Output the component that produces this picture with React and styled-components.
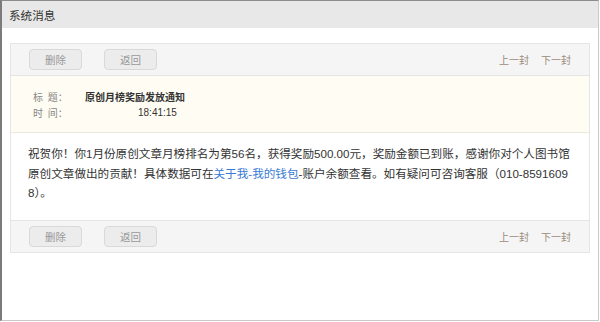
import React from "react";
import styled, { createGlobalStyle } from "styled-components";

const Global = createGlobalStyle`
  html, body { margin: 0; padding: 0; background: #fff; }
  body { font-family: "Liberation Sans", "Noto Sans CJK SC", sans-serif; }
  * { box-sizing: border-box; }
`;

const Window = styled.div`
  width: 599px;
  height: 321px;
  border-top: 1px solid #8c8c8c;
  border-left: 2px solid #7b7b7b;
  border-right: 1px solid #c9c9c9;
  border-bottom: 1px solid #c9c9c9;
  display: flex;
  flex-direction: column;
`;

const Header = styled.div`
  height: 27px;
  background: #e8e8e8;
  display: flex;
  align-items: center;
  padding-left: 7px;
  font-size: 11.6px;
  color: #333;
`;

const Main = styled.div`
  padding: 15px 8px 0 8px;
`;

const Panel = styled.div`
  border: 1px solid #e6e6e6;
`;

const Toolbar = styled.div`
  height: 32px;
  background: #f5f5f5;
  display: flex;
  align-items: center;
  justify-content: space-between;
  padding: 0 18px;
  border-${(p) => (p.$bottom ? "top" : "bottom")}: 1px solid #e4e4e4;
`;

const Buttons = styled.div`
  display: flex;
  gap: 22px;
`;

const Button = styled.button`
  width: 53px;
  height: 21px;
  border: 1px solid #d9d9d9;
  border-radius: 4px;
  background: #ececec;
  color: #999;
  font-family: inherit;
  font-size: 10.5px;
  padding: 0;
  display: flex;
  align-items: center;
  justify-content: center;
`;

const Nav = styled.div`
  display: flex;
  gap: 12px;
  font-size: 10px;
  color: #9b8b7b;
`;

const Info = styled.div`
  background: #fffdf3;
  height: 57px;
  border-bottom: 1px solid #ece9df;
  padding-left: 22px;
  display: flex;
  flex-direction: column;
  justify-content: center;
  gap: 4px;
  font-size: 10px;
`;

const InfoRow = styled.div`
  display: flex;
  align-items: center;
  height: 12px;
`;

const Label = styled.span`
  width: 52px;
  color: #888;
  word-spacing: 2px;
`;

const Value = styled.span`
  color: #333;
  font-weight: ${(p) => (p.$bold ? 700 : 400)};
  padding-left: ${(p) => p.$indent || 0}px;
`;

const Content = styled.div`
  background: #fff;
  height: 87px;
  padding: 11px 17px 0 17px;
`;

const Text = styled.p`
  margin: 0;
  width: 544px;
  font-size: 11.6px;
  line-height: 19.5px;
  color: #333;
  word-break: break-all;
`;

const Link = styled.a`
  color: #3a7bd5;
  text-decoration: none;
`;

function Bar({ bottom }) {
  return (
    <Toolbar $bottom={bottom}>
      <Buttons>
        <Button>删除</Button>
        <Button>返回</Button>
      </Buttons>
      <Nav>
        <span>上一封</span>
        <span>下一封</span>
      </Nav>
    </Toolbar>
  );
}

export default function App() {
  return (
    <>
      <Global />
      <Window>
        <Header>系统消息</Header>
        <Main>
          <Panel>
            <Bar />
            <Info>
              <InfoRow>
                <Label>标 题：</Label>
                <Value $bold>原创月榜奖励发放通知</Value>
              </InfoRow>
              <InfoRow>
                <Label>时 间：</Label>
                <Value $indent={53}>18:41:15</Value>
              </InfoRow>
            </Info>
            <Content>
              <Text>
                祝贺你！你1月份原创文章月榜排名为第56名，获得奖励500.00元，奖励金额已到账，感谢你对个人图书馆原创文章做出的贡献！具体数据可在
                <Link href="#">关于我-我的钱包</Link>
                -账户余额查看。如有疑问可咨询客服（010-85916098）。
              </Text>
            </Content>
            <Bar bottom />
          </Panel>
        </Main>
      </Window>
    </>
  );
}
